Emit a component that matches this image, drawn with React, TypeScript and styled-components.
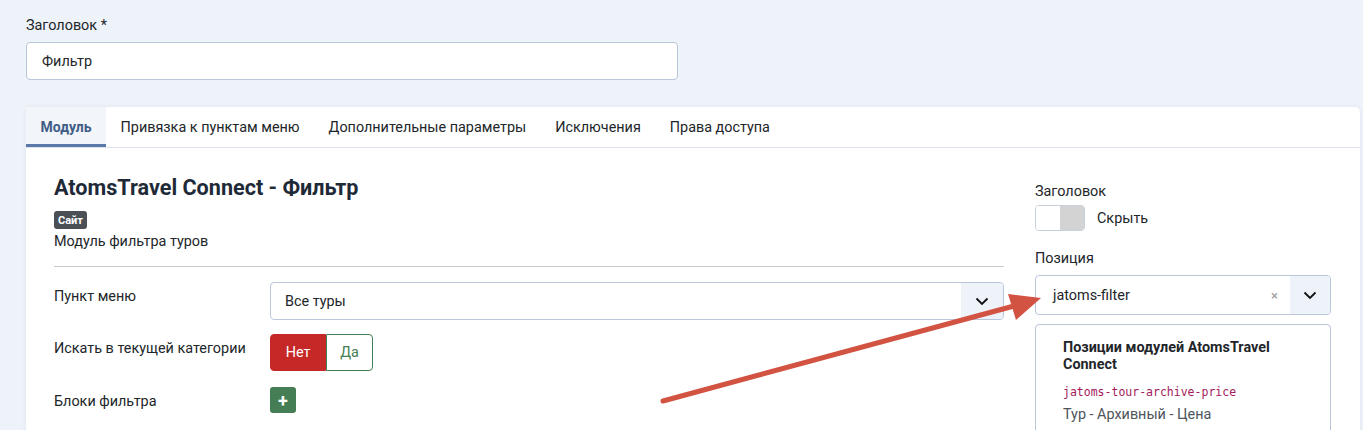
import React from 'react'
import styled, {createGlobalStyle} from 'styled-components'

const GlobalStyle = createGlobalStyle`
  html, body {
    margin: 0;
    padding: 0;
    background: #eef2f9;
  }
  body {
    font-family: Roboto, "Noto Sans", "Liberation Sans", sans-serif;
    font-size: 14.4px;
    color: #22262a;
  }
  * {
    box-sizing: border-box;
  }
`

const Page = styled.div`
  position: relative;
  width: 1363px;
  height: 430px;
  overflow: hidden;
  padding: 16px 3px 0 26px;
`

const FieldLabel = styled.div`
  font-size: 14.4px;
  line-height: 20px;
  color: #22262a;
`

const TitleInput = styled.div`
  margin-top: 6px;
  width: 652px;
  height: 38px;
  display: flex;
  align-items: center;
  padding: 0 15px;
  background: #fff;
  border: 1px solid #b9c6db;
  border-radius: 4px;
  font-size: 14.4px;
`

const Card = styled.div`
  margin-top: 27px;
  background: #fff;
  border-radius: 5px 5px 0 0;
  box-shadow: 0 0 4px rgba(120, 140, 170, 0.12);
`

const Tabs = styled.div`
  display: flex;
  height: 41px;
  border-bottom: 1px solid #dde3ea;
`

const Tab = styled.div<{active?: boolean}>`
  display: flex;
  align-items: center;
  padding: 3px 14.5px 0;
  height: 40px;
  font-size: ${p => (p.active ? 14 : 14.4)}px;
  font-weight: ${p => (p.active ? 700 : 400)};
  color: ${p => (p.active ? '#415d87' : '#22262a')};
  background: ${p => (p.active ? '#f2f5f9' : 'transparent')};
  border-bottom: 3px solid ${p => (p.active ? '#5b79a6' : 'transparent')};
`

const Body = styled.div`
  display: grid;
  grid-template-columns: 1fr 296px;
  column-gap: 31px;
  padding: 28px 29px 0 28px;
`

const Main = styled.div`
  display: flex;
  flex-direction: column;
`

const Title = styled.h2`
  margin: 0;
  font-size: 21.6px;
  line-height: 24px;
  font-weight: 700;
  color: #1f2a38;
`

const Badge = styled.span`
  align-self: flex-start;
  margin-top: 11px;
  height: 18px;
  padding: 0 4px;
  display: flex;
  align-items: center;
  background: #4b5056;
  color: #fff;
  font-size: 11px;
  font-weight: 700;
  border-radius: 3px;
`

const Description = styled.div`
  margin-top: 3px;
  line-height: 20px;
  font-size: 14.4px;
`

const Divider = styled.hr`
  margin: 14px 0 15px;
  border: 0;
  border-top: 1px solid #c8ccd1;
`

const FormRow = styled.div<{gap?: number}>`
  display: grid;
  grid-template-columns: 216px 1fr;
  align-items: start;
  margin-bottom: ${p => p.gap ?? 14}px;
`

const RowLabel = styled.div<{offset?: number}>`
  padding-top: ${p => p.offset ?? 5}px;
  line-height: 20px;
  font-size: 14.4px;
`

const Select = styled.div<{h?: number}>`
  display: flex;
  align-items: stretch;
  height: ${p => p.h ?? 38}px;
  background: #fff;
  border: 1px solid #b9c6db;
  border-radius: 4px;
  overflow: hidden;
`

const SelectValue = styled.div<{pad?: number}>`
  flex: 1;
  display: flex;
  align-items: center;
  padding-left: ${p => p.pad ?? 14}px;
  font-size: 14.4px;
`

const Clear = styled.div`
  display: flex;
  align-items: center;
  padding: 0 12px;
  color: #9a9a9a;
  font-size: 13px;
`

const Chevron = styled.div<{w?: number}>`
  width: ${p => p.w ?? 42}px;
  display: flex;
  align-items: center;
  justify-content: center;
  background: #eef2f9;
  color: #111;
`

const SwitchGroup = styled.div`
  display: flex;
  height: 37px;
`

const SwitchBtn = styled.div<{on?: boolean}>`
  display: flex;
  align-items: center;
  justify-content: center;
  width: ${p => (p.on ? 56 : 47)}px;
  font-size: 14.4px;
  background: ${p => (p.on ? '#c52827' : '#fff')};
  color: ${p => (p.on ? '#fff' : '#457d54')};
  border: 1px solid ${p => (p.on ? '#c52827' : '#457d54')};
  border-radius: ${p => (p.on ? '4px 0 0 4px' : '0 4px 4px 0')};
`

const PlusButton = styled.div`
  width: 26px;
  height: 26px;
  display: flex;
  align-items: center;
  justify-content: center;
  background: #457d54;
  color: #fff;
  border-radius: 3px;
  font-size: 18px;
  font-weight: 700;
`

const Side = styled.div`
  display: flex;
  flex-direction: column;
  padding-top: 4px;
`

const SideLabel = styled.div<{top?: number}>`
  margin-top: ${p => p.top ?? 0}px;
  padding-top: 2px;
  line-height: 20px;
  font-size: 14.4px;
`

const ToggleRow = styled.div`
  display: flex;
  align-items: center;
  gap: 12px;
  margin-top: 3px;
`

const Toggle = styled.div`
  display: flex;
  width: 50px;
  height: 26px;
  border: 1px solid #c6cfdb;
  border-radius: 4px;
  overflow: hidden;
`

const ToggleHalf = styled.div<{filled?: boolean}>`
  flex: 1;
  background: ${p => (p.filled ? '#d3d3d3' : '#fff')};
`

const Dropdown = styled.div`
  margin-top: 9px;
  height: 120px;
  border: 1px solid #b9c6db;
  border-radius: 4px 4px 0 0;
  padding: 14px 20px 0 27px;
  background: #fff;
`

const GroupTitle = styled.div`
  font-size: 14.4px;
  line-height: 17px;
  font-weight: 700;
  color: #22262a;
`

const Code = styled.div`
  margin-top: 11px;
  font-family: "DejaVu Sans Mono", "Liberation Mono", monospace;
  font-size: 11.5px;
  line-height: 16px;
  color: #a3195b;
`

const OptionText = styled.div`
  margin-top: 5px;
  font-size: 14.4px;
  line-height: 20px;
  color: #4e545a;
`

const ArrowOverlay = styled.svg`
  position: absolute;
  left: 0;
  top: 0;
  pointer-events: none;
`

const ChevronIcon = () => (
  <svg width="14" height="9" viewBox="0 0 14 9">
    <path d="M1.5 1.5 L7 7 L12.5 1.5" fill="none" stroke="#111" strokeWidth="1.8" />
  </svg>
)

const tabs = [
  'Модуль',
  'Привязка к пунктам меню',
  'Дополнительные параметры',
  'Исключения',
  'Права доступа',
]

export default function App() {
  return (
    <Page>
      <GlobalStyle />
      <FieldLabel>Заголовок *</FieldLabel>
      <TitleInput>Фильтр</TitleInput>
      <Card>
        <Tabs>
          {tabs.map((t, i) => (
            <Tab key={t} active={i === 0}>
              {t}
            </Tab>
          ))}
        </Tabs>
        <Body>
          <Main>
            <Title>AtomsTravel Connect - Фильтр</Title>
            <Badge>Сайт</Badge>
            <Description>Модуль фильтра туров</Description>
            <Divider />
            <FormRow>
              <RowLabel>Пункт меню</RowLabel>
              <Select>
                <SelectValue>Все туры</SelectValue>
                <Chevron>
                  <ChevronIcon />
                </Chevron>
              </Select>
            </FormRow>
            <FormRow gap={16}>
              <RowLabel offset={5}>Искать в текущей категории</RowLabel>
              <SwitchGroup>
                <SwitchBtn on>Нет</SwitchBtn>
                <SwitchBtn>Да</SwitchBtn>
              </SwitchGroup>
            </FormRow>
            <FormRow>
              <RowLabel offset={5}>Блоки фильтра</RowLabel>
              <PlusButton>+</PlusButton>
            </FormRow>
          </Main>
          <Side>
            <SideLabel>Заголовок</SideLabel>
            <ToggleRow>
              <Toggle>
                <ToggleHalf />
                <ToggleHalf filled />
              </Toggle>
              <span>Скрыть</span>
            </ToggleRow>
            <SideLabel top={16}>Позиция</SideLabel>
            <Select h={40} style={{marginTop: 6}}>
              <SelectValue pad={17}>jatoms-filter</SelectValue>
              <Clear>×</Clear>
              <Chevron w={40}>
                <ChevronIcon />
              </Chevron>
            </Select>
            <Dropdown>
              <GroupTitle>
                Позиции модулей AtomsTravel
                <br />
                Connect
              </GroupTitle>
              <Code>jatoms-tour-archive-price</Code>
              <OptionText>Тур - Архивный - Цена</OptionText>
            </Dropdown>
          </Side>
        </Body>
      </Card>
      <ArrowOverlay width="1363" height="430" viewBox="0 0 1363 430">
        <line
          x1="663"
          y1="401"
          x2="1014"
          y2="306"
          stroke="#d35343"
          strokeWidth="5"
          strokeLinecap="round"
        />
        <polygon points="1041,298 1008,294 1016,320" fill="#d35343" />
      </ArrowOverlay>
    </Page>
  )
}
